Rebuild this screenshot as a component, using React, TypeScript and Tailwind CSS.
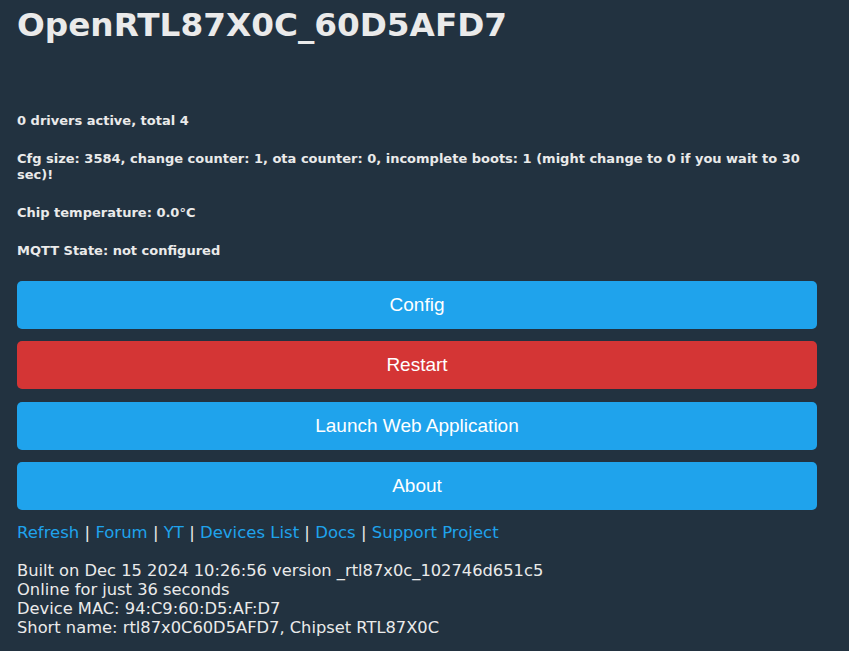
import React from "react";

const btn = "flex h-[48px] w-full items-center justify-center rounded-[5px] text-[19px] text-white";

export default function App() {
  return (
    <div className="min-h-[651px] w-full bg-[#223240] text-[#eaeaea]" style={{ fontFamily: '"DejaVu Sans", Verdana, sans-serif' }}>
      <div className="w-[800px] ml-[17px]">
        <h1 className="pt-[6px] text-[32.7px] font-bold leading-[38px]">OpenRTL87X0C_60D5AFD7</h1>
        <div className="mt-[69px] flex flex-col gap-[22px] text-[13px] font-bold leading-[16px]">
          <p>0 drivers active, total 4</p>
          <p>Cfg size: 3584, change counter: 1, ota counter: 0, incomplete boots: 1 (might change to 0 if you wait to 30 sec)!</p>
          <p>Chip temperature: 0.0°C</p>
          <p>MQTT State: not configured</p>
        </div>
        <div className="mt-[22px] flex flex-col gap-[12.4px]" style={{ fontFamily: '"Liberation Sans", Arial, sans-serif' }}>
          <div className={btn + " bg-[#1fa3ec]"}>Config</div>
          <div className={btn + " bg-[#d43535]"}>Restart</div>
          <div className={btn + " bg-[#1fa3ec]"}>Launch Web Application</div>
          <div className={btn + " bg-[#1fa3ec]"}>About</div>
        </div>
        <div className="mt-[13px] text-[16.5px] leading-[20px]">
          <span className="text-[#1fa3ec]">Refresh</span> | <span className="text-[#1fa3ec]">Forum</span> | <span className="text-[#1fa3ec]">YT</span> | <span className="text-[#1fa3ec]">Devices List</span> | <span className="text-[#1fa3ec]">Docs</span> | <span className="text-[#1fa3ec]">Support Project</span>
        </div>
        <div className="mt-[18px] text-[16.3px] leading-[19px]">
          <div>Built on Dec 15 2024 10:26:56 version _rtl87x0c_102746d651c5</div>
          <div>Online for just 36 seconds</div>
          <div>Device MAC: 94:C9:60:D5:AF:D7</div>
          <div>Short name: rtl87x0C60D5AFD7, Chipset RTL87X0C</div>
        </div>
      </div>
    </div>
  );
}
